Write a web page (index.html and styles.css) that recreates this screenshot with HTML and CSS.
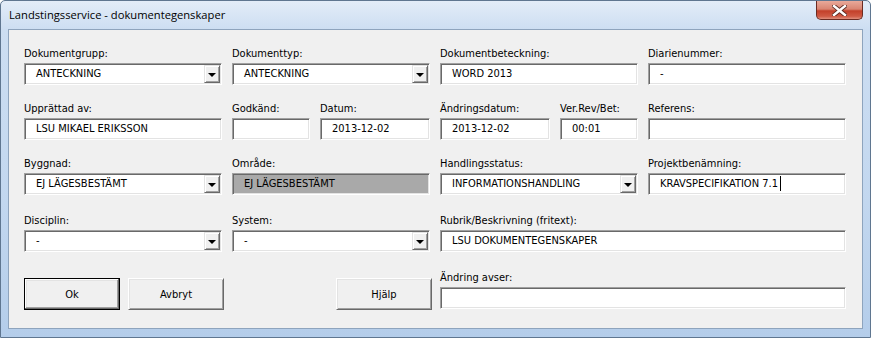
FILE: index.html
```html
<!DOCTYPE html>
<html lang="sv">
<head>
	<meta charset="UTF-8">
	<title>Landstingsservice - dokumentegenskaper</title>
	<link rel="stylesheet" href="styles.css">
</head>
<body>
	<div class="window">
		<div class="titlebar">
			<span class="title">Landstingsservice - dokumentegenskaper</span>
			<div class="close">
				<svg width="15" height="11" viewBox="0 0 15 11">
					<path d="M2 1 L13 10 M13 1 L2 10" stroke="#5a2a22" stroke-width="4.2" stroke-linecap="square" fill="none"/>
					<path d="M2 1 L13 10 M13 1 L2 10" stroke="#ffffff" stroke-width="2.4" stroke-linecap="square" fill="none"/>
				</svg>
			</div>
		</div>

		<div class="client">
			<div class="row">
				<div class="group w198">
					<label>Dokumentgrupp:</label>
					<div class="field combo"><span class="val">ANTECKNING</span><span class="drop"></span></div>
				</div>
				<div class="group w198">
					<label>Dokumenttyp:</label>
					<div class="field combo"><span class="val">ANTECKNING</span><span class="drop"></span></div>
				</div>
				<div class="group w198">
					<label>Dokumentbeteckning:</label>
					<div class="field"><span class="val">WORD 2013</span></div>
				</div>
				<div class="group w198">
					<label>Diarienummer:</label>
					<div class="field"><span class="val">-</span></div>
				</div>
			</div>

			<div class="row">
				<div class="group w198">
					<label>Upprättad av:</label>
					<div class="field"><span class="val">LSU MIKAEL ERIKSSON</span></div>
				</div>
				<div class="group w78">
					<label>Godkänd:</label>
					<div class="field"><span class="val"></span></div>
				</div>
				<div class="group w110">
					<label>Datum:</label>
					<div class="field"><span class="val">2013-12-02</span></div>
				</div>
				<div class="group w110">
					<label>Ändringsdatum:</label>
					<div class="field"><span class="val">2013-12-02</span></div>
				</div>
				<div class="group w78">
					<label>Ver.Rev/Bet:</label>
					<div class="field"><span class="val">00:01</span></div>
				</div>
				<div class="group w198">
					<label>Referens:</label>
					<div class="field"><span class="val"></span></div>
				</div>
			</div>

			<div class="row">
				<div class="group w198">
					<label>Byggnad:</label>
					<div class="field combo"><span class="val">EJ LÄGESBESTÄMT</span><span class="drop"></span></div>
				</div>
				<div class="group w198">
					<label>Område:</label>
					<div class="field disabled"><span class="val">EJ LÄGESBESTÄMT</span></div>
				</div>
				<div class="group w198">
					<label>Handlingsstatus:</label>
					<div class="field combo"><span class="val">INFORMATIONSHANDLING</span><span class="drop"></span></div>
				</div>
				<div class="group w198">
					<label>Projektbenämning:</label>
					<div class="field"><span class="val">KRAVSPECIFIKATION 7.1<span class="caret"></span></span></div>
				</div>
			</div>

			<div class="row wide-gap">
				<div class="group w198">
					<label>Disciplin:</label>
					<div class="field combo"><span class="val">-</span><span class="drop"></span></div>
				</div>
				<div class="group w198">
					<label>System:</label>
					<div class="field combo"><span class="val">-</span><span class="drop"></span></div>
				</div>
				<div class="group w406">
					<label>Rubrik/Beskrivning (fritext):</label>
					<div class="field"><span class="val">LSU DOKUMENTEGENSKAPER</span></div>
				</div>
			</div>

			<div class="row wide-gap buttons">
				<button class="btn default">Ok</button>
				<button class="btn">Avbryt</button>
				<button class="btn help">Hjälp</button>
				<div class="group w406">
					<label>Ändring avser:</label>
					<div class="field"><span class="val"></span></div>
				</div>
			</div>
		</div>
	</div>
</body>
</html>
```

FILE: styles.css
```css
html, body
{
	margin: 0;
	padding: 0;
	width: 871px;
	height: 338px;
	overflow: hidden;
	background: #ffffff;
}

.window
{
	box-sizing: border-box;
	width: 871px;
	height: 338px;
	border: 1px solid #5f7690;
	border-radius: 5px 5px 0 0;
	padding: 0 7px 8px 7px;
	background: linear-gradient(to bottom, #e3ecf8 0px, #cddef2 28px, #c2d7ef 60%, #b4cdea 100%);
	display: flex;
	flex-direction: column;
}

.titlebar
{
	height: 28px;
	display: flex;
	justify-content: space-between;
	align-items: flex-start;
	flex-shrink: 0;
}

.title
{
	font-family: "Open Sans", "Liberation Sans", sans-serif;
	font-size: 11.2px;
	color: #000000;
	margin-top: 6px;
	margin-left: 1px;
	line-height: 16px;
}

.close
{
	width: 47px;
	height: 19px;
	box-sizing: border-box;
	border: 1px solid #6b2b22;
	border-top: 0;
	border-radius: 0 0 5px 5px;
	background: linear-gradient(to bottom, #e9a99a 0%, #d98572 45%, #c3402a 55%, #cf5a44 85%, #e0907e 100%);
	display: flex;
	align-items: center;
	justify-content: center;
}

.client
{
	flex: 1;
	border: 1px solid #8ea4bd;
	background: #f0f0f0;
	padding: 17px 15px 0 15px;
	font-family: "DejaVu Sans Condensed", "DejaVu Sans", sans-serif;
	font-stretch: condensed;
	font-size: 11px;
	color: #000000;
}

.row
{
	display: flex;
	gap: 10px;
	align-items: flex-start;
}

.row + .row { margin-top: 17px; }
.row.wide-gap { margin-top: 19px; }

.group label
{
	display: block;
	height: 14px;
	line-height: 14px;
	margin-bottom: 2px;
	white-space: nowrap;
}

.w198 { width: 198px; }
.w110 { width: 110px; }
.w78 { width: 78px; }
.w406 { width: 406px; }

.field
{
	box-sizing: border-box;
	height: 22px;
	padding: 1px;
	border: 1px solid;
	border-color: #a0a0a0 #ffffff #ffffff #a0a0a0;
	box-shadow: inset 1px 1px 0 #696969, inset -1px -1px 0 #e3e3e3;
	background: #ffffff;
	display: flex;
	align-items: center;
}

.field.disabled { background: #a9a9a9; }

.val
{
	flex: 1;
	padding-left: 10px;
	line-height: 18px;
	white-space: nowrap;
	overflow: hidden;
}

.caret
{
	display: inline-block;
	width: 1px;
	height: 15px;
	background: #000000;
	vertical-align: -4px;
	margin-left: 2px;
}

.drop
{
	box-sizing: border-box;
	width: 16px;
	height: 18px;
	border: 1px solid;
	border-color: #e3e3e3 #696969 #696969 #e3e3e3;
	box-shadow: inset 1px 1px 0 #ffffff, inset -1px -1px 0 #a0a0a0;
	background: #f0f0f0;
	position: relative;
}

.drop::after
{
	content: "";
	position: absolute;
	left: 3px;
	top: 7px;
	border-left: 4px solid transparent;
	border-right: 4px solid transparent;
	border-top: 4px solid #000000;
}

.buttons { gap: 8px; }

.btn
{
	box-sizing: border-box;
	width: 96px;
	height: 32px;
	margin-top: 7px;
	font-family: "DejaVu Sans Condensed", "DejaVu Sans", sans-serif;
	font-stretch: condensed;
	font-size: 11px;
	color: #000000;
	background: #f0f0f0;
	border: 1px solid;
	border-color: #ffffff #696969 #696969 #ffffff;
	box-shadow: inset 1px 1px 0 #e3e3e3, inset -1px -1px 0 #a0a0a0;
	padding: 0;
}

.btn.default
{
	border: 1px solid #000000;
	box-shadow: inset -1px -1px 0 #696969, inset 1px 1px 0 #ffffff, inset -2px -2px 0 #a0a0a0, inset 2px 2px 0 #e3e3e3;
}

.btn.help { margin-left: 104px; }
```
